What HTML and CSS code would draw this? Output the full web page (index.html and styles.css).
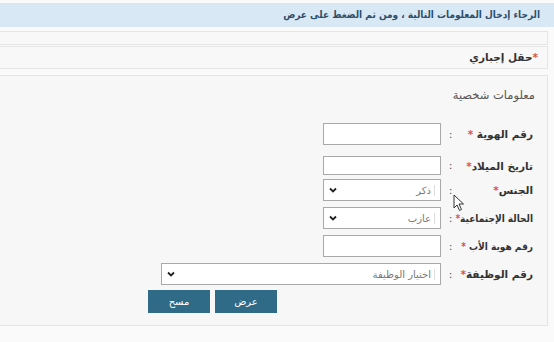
FILE: index.html
```html
<!DOCTYPE html>
<html lang="ar" dir="rtl">
<head>
<meta charset="utf-8">
<link rel="stylesheet" href="styles.css">
</head>
<body>
<div class="notice">الرجاء إدخال المعلومات التالية ، ومن ثم الضغط على عرض</div>
<div class="box box-empty"></div>
<div class="box box-req"><span class="star">*</span>حقل إجباري</div>
<section class="panel">
  <h2 class="panel-title">معلومات شخصية</h2>
  <div class="form">
    <div class="row row-first">
      <label class="lbl">رقم الهوية <span class="star">*</span></label>
      <span class="colon">:</span>
      <input class="field" type="text">
    </div>
    <div class="row row-date">
      <label class="lbl">تاريخ الميلاد<span class="star">*</span></label>
      <span class="colon">:</span>
      <input class="field field-short" type="text">
    </div>
    <div class="row">
      <label class="lbl">الجنس<span class="star">*</span></label>
      <span class="colon">:</span>
      <div class="select">
        <span class="sel-text">ذكر</span>
        <svg class="chev" width="8" height="6" viewBox="0 0 8 6"><path d="M1 1.5 L4 4.5 L7 1.5" fill="none" stroke="#222" stroke-width="1.8"/></svg>
      </div>
    </div>
    <div class="row">
      <label class="lbl lbl-long">الحالة الإجتماعية<span class="star">*</span></label>
      <span class="colon">:</span>
      <div class="select">
        <span class="sel-text">عازب</span>
        <svg class="chev" width="8" height="6" viewBox="0 0 8 6"><path d="M1 1.5 L4 4.5 L7 1.5" fill="none" stroke="#222" stroke-width="1.8"/></svg>
      </div>
    </div>
    <div class="row">
      <label class="lbl lbl-long">رقم هوية الأب <span class="star">*</span></label>
      <span class="colon">:</span>
      <input class="field" type="text">
    </div>
    <div class="row">
      <label class="lbl">رقم الوظيفة<span class="star">*</span></label>
      <span class="colon">:</span>
      <div class="select select-wide">
        <span class="sel-text">اختيار الوظيفة</span>
        <svg class="chev" width="8" height="6" viewBox="0 0 8 6"><path d="M1 1.5 L4 4.5 L7 1.5" fill="none" stroke="#222" stroke-width="1.8"/></svg>
      </div>
    </div>
    <div class="buttons">
      <button class="btn">عرض</button>
      <button class="btn">مسح</button>
    </div>
  </div>
  <svg class="cursor" width="12" height="18" viewBox="0 0 12 18"><path d="M1 1 L1 14 L4 11 L6.5 16.5 L8.5 15.5 L6 10 L10.5 10 Z" fill="#fff" stroke="#333" stroke-width="1"/></svg>
</section>
</body>
</html>
```

FILE: styles.css
```css
html, body {
  margin: 0;
  padding: 0;
}
body {
  background: #fafafa;
  font-family: "DejaVu Sans", "Noto Sans", sans-serif;
  direction: rtl;
  width: 554px;
  height: 342px;
  overflow: hidden;
  position: relative;
}
.notice {
  margin-top: 3px;
  height: 24px;
  line-height: 24px;
  background: #d8e9f5;
  color: #2f4f6b;
  font-family: "DejaVu Sans Condensed", "DejaVu Sans", sans-serif;
  font-stretch: condensed;
  font-size: 10px;
  font-weight: bold;
  padding-right: 14px;
  white-space: nowrap;
}
.box {
  margin: 0 6px 0 -2px;
  border: 1px solid #e6e6e6;
  background: #f8f8f8;
}
.box-empty {
  margin-top: 4px;
  height: 12px;
}
.box-req {
  margin-top: 1px;
  height: 21px;
  line-height: 21px;
  font-size: 10.5px;
  font-weight: bold;
  color: #333;
  padding-right: 9px;
}
.star {
  color: #d9534f;
  font-weight: bold;
}
.panel {
  margin: 6px 6px 0 -2px;
  height: 249px;
  border: 1px solid #e4e4e4;
  background: #f7f7f7;
  position: relative;
}
.panel-title {
  margin: 0;
  padding: 11px 12px 0 0;
  font-size: 11.5px;
  font-weight: normal;
  color: #555;
  line-height: 16px;
}
.form {
  padding: 20px 14px 0 0;
}
.row {
  display: flex;
  align-items: center;
  height: 22px;
  margin-bottom: 6px;
}
.row-first {
  margin-bottom: 11px;
}
.row-date {
  height: 19px;
  margin-bottom: 4px;
}
.lbl {
  width: 75px;
  flex: none;
  font-size: 10.5px;
  font-weight: bold;
  color: #333;
  white-space: nowrap;
}
.lbl-long {
  font-family: "DejaVu Sans Condensed", "DejaVu Sans", sans-serif;
  font-stretch: condensed;
  font-size: 10px;
}
.colon {
  width: 15px;
  flex: none;
  text-align: center;
  color: #555;
  font-size: 11px;
  padding-left: 2px;
}
.field {
  box-sizing: border-box;
  width: 118px;
  height: 22px;
  border: 1px solid #a9a9a9;
  background: #fff;
  margin: 0;
  padding: 0;
}
.field-short {
  height: 19px;
}
.select {
  box-sizing: border-box;
  width: 118px;
  height: 22px;
  border: 1px solid #a9a9a9;
  background: #fff;
  display: flex;
  align-items: center;
  justify-content: space-between;
  padding: 0 5px 0 5px;
}
.select-wide {
  width: 280px;
}
.sel-text {
  font-size: 10px;
  color: #777;
  border-right: 1px solid #ddd;
  padding-right: 3px;
}
.chev {
  display: block;
}
.buttons {
  display: flex;
  gap: 5px;
  padding-right: 256px;
  margin-top: -1px;
}
.btn {
  width: 62px;
  height: 23px;
  background: #2f6a86;
  color: #fff;
  border: none;
  font-family: "DejaVu Sans", sans-serif;
  font-size: 10px;
  padding: 0;
}
.cursor {
  position: absolute;
  left: 454px;
  top: 118px;
}
```
